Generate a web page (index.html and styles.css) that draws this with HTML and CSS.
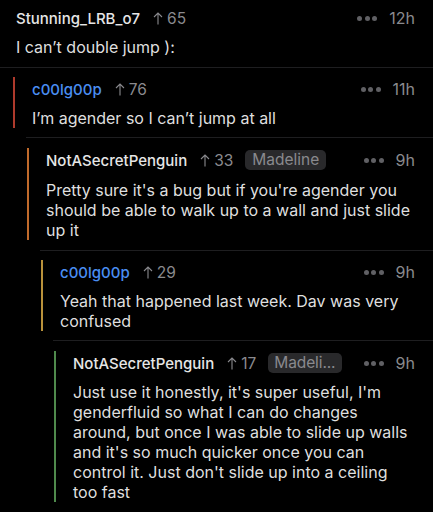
FILE: index.html
```html
<!DOCTYPE html>
<html>
<head>
<meta charset="utf-8">
<link rel="stylesheet" href="styles.css">
</head>
<body>
<div class="thread">
  <div class="comment l0">
    <div class="body">
      <div class="head">
        <span class="user">Stunning_LRB_o7</span>
        <span class="votes"><svg class="arrow" viewBox="0 0 10 13"><path d="M5 12.5V1M1 5L5 1L9 5" fill="none" stroke="currentColor" stroke-width="1.1"/></svg>65</span>
        <span class="spacer"></span>
        <span class="more"><i></i><i></i><i></i></span>
        <span class="time">12h</span>
      </div>
      <p class="text">I can’t double jump ):</p>
    </div>
  </div>
  <div class="comment l1">
    <div class="body">
      <div class="head">
        <span class="user op">c00lg00p</span>
        <span class="votes"><svg class="arrow" viewBox="0 0 10 13"><path d="M5 12.5V1M1 5L5 1L9 5" fill="none" stroke="currentColor" stroke-width="1.1"/></svg>76</span>
        <span class="spacer"></span>
        <span class="more"><i></i><i></i><i></i></span>
        <span class="time">11h</span>
      </div>
      <p class="text">I’m agender so I can’t jump at all</p>
    </div>
  </div>
  <div class="comment l2">
    <div class="body">
      <div class="head">
        <span class="user">NotASecretPenguin</span>
        <span class="votes"><svg class="arrow" viewBox="0 0 10 13"><path d="M5 12.5V1M1 5L5 1L9 5" fill="none" stroke="currentColor" stroke-width="1.1"/></svg>33</span>
        <span class="flair">Madeline</span>
        <span class="spacer"></span>
        <span class="more"><i></i><i></i><i></i></span>
        <span class="time">9h</span>
      </div>
      <p class="text">Pretty sure it's a bug but if you're agender you should be able to walk up to a wall and just slide up it</p>
    </div>
  </div>
  <div class="comment l3">
    <div class="body">
      <div class="head">
        <span class="user op">c00lg00p</span>
        <span class="votes"><svg class="arrow" viewBox="0 0 10 13"><path d="M5 12.5V1M1 5L5 1L9 5" fill="none" stroke="currentColor" stroke-width="1.1"/></svg>29</span>
        <span class="spacer"></span>
        <span class="more"><i></i><i></i><i></i></span>
        <span class="time">9h</span>
      </div>
      <p class="text">Yeah that happened last week. Dav was very confused</p>
    </div>
  </div>
  <div class="comment l4">
    <div class="body">
      <div class="head">
        <span class="user">NotASecretPenguin</span>
        <span class="votes"><svg class="arrow" viewBox="0 0 10 13"><path d="M5 12.5V1M1 5L5 1L9 5" fill="none" stroke="currentColor" stroke-width="1.1"/></svg>17</span>
        <span class="flair short" title="Madeline">Madeli...</span>
        <span class="spacer"></span>
        <span class="more"><i></i><i></i><i></i></span>
        <span class="time">9h</span>
      </div>
      <p class="text">Just use it honestly, it's super useful, I'm genderfluid so what I can do changes around, but once I was able to slide up walls and it's so much quicker once you can control it. Just don't slide up into a ceiling too fast</p>
    </div>
  </div>
</div>
</body>
</html>
```

FILE: styles.css
```css
html, body {
  margin: 0;
  padding: 0;
  background: #000;
}
body {
  font-family: Inter, "Noto Sans", sans-serif;
  color: #dfdfdf;
  width: 433px;
  height: 512px;
  overflow: hidden;
}
.thread {
  display: flex;
  flex-direction: column;
}
.comment {
  padding: 9px 18px 9px 0;
  border-top: 1px solid #1e1e20;
}
.comment.l0 {
  padding-top: 6px;
  padding-bottom: 10px;
  padding-left: 16px;
  border-top: none;
}
.comment.l1 { padding-left: 13px; }
.comment.l2 { padding-left: 27px; }
.comment.l3 { padding-left: 41px; }
.comment.l4 { padding-left: 54px; }

.comment.l2,
.comment.l3,
.comment.l4 {
  border-top: none;
  padding-top: 10px;
  background-image: linear-gradient(#1e1e20, #1e1e20);
  background-size: 100% 1px;
  background-repeat: no-repeat;
}
.comment.l2 { background-position: 26px 0; padding-top: 11px; padding-bottom: 10px; }
.comment.l3 { background-position: 40px 0; }
.comment.l4 { background-position: 53px 0; padding-top: 11px; }
.comment.l2 .text { margin-top: 8px; }

.comment.l1 .body,
.comment.l2 .body,
.comment.l3 .body,
.comment.l4 .body {
  padding-left: 17px;
  border-left: 2px solid;
}
.comment.l1 .body { border-color: #ae3a2c; }
.comment.l2 .body { border-color: #c06a2b; }
.comment.l3 .body { border-color: #b9923b; }
.comment.l4 .body { border-color: #4f8a4c; }

.head {
  display: flex;
  align-items: center;
  height: 24px;
  font-size: 15px;
}
.user {
  font-weight: 500;
  color: #e6e6e6;
}
.user.op {
  color: #4a8ef2;
}
.votes {
  display: flex;
  align-items: center;
  margin-left: 13px;
  color: #8a8a8e;
  font-size: 15.5px;
}
.arrow {
  width: 10px;
  height: 13px;
  margin-right: 4px;
}
.flair {
  margin-left: 12px;
  background: #29292b;
  color: #8a8a8e;
  border-radius: 5px;
  height: 20px;
  line-height: 20px;
  padding: 0 7px;
  font-size: 15.5px;
  white-space: nowrap;
}
.flair.short {
  padding: 0 6px;
  letter-spacing: -0.1px;
}
.spacer {
  flex: 1;
}
.more {
  display: flex;
  gap: 2.5px;
  margin-right: 12px;
}
.more i {
  width: 5px;
  height: 5px;
  border-radius: 50%;
  background: #606064;
}
.time {
  color: #8a8a8e;
  font-size: 16px;
}
.text {
  margin: 7px 0 0;
  font-size: 16px;
  line-height: 20px;
}
```
